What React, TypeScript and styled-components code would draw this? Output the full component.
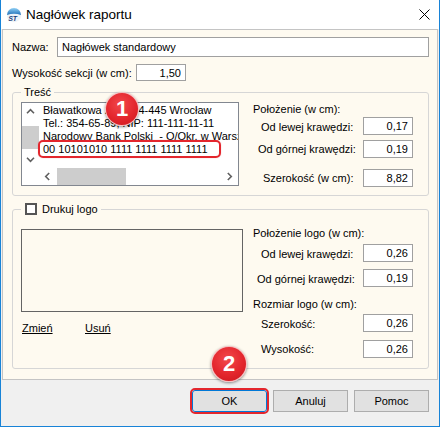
import React from 'react';
import styled, { createGlobalStyle } from 'styled-components';

const GlobalStyle = createGlobalStyle`
  html, body {
    margin: 0;
    padding: 0;
    background: #ffffff;
  }
  body {
    font-family: "Liberation Sans", Arial, sans-serif;
    font-size: 11px;
    color: #000;
  }
  * {
    box-sizing: border-box;
  }
`;

const Window = styled.div`
  width: 440px;
  height: 427px;
  display: flex;
  flex-direction: column;
  border: 1px solid #1883d7;
  border-top: none;
  background: #f0f0f0;
`;

const TitleBar = styled.div`
  height: 29px;
  flex: none;
  display: flex;
  align-items: center;
  padding: 0 9px 0 5px;
  background: #ffffff;
`;

const TitleText = styled.span`
  flex: 1;
  margin-left: 4px;
  font-size: 13.5px;
`;

const Body = styled.div`
  height: 351px;
  flex: none;
  margin: 0 1px;
  border: 1px solid #c4c4c4;
  background: #fefaf0;
  padding: 7px 8px 0 9px;
`;

const Row = styled.div<{ $cols: string; $h: number; $mt?: number }>`
  display: grid;
  grid-template-columns: ${(p) => p.$cols};
  align-items: center;
  height: ${(p) => p.$h}px;
  margin-top: ${(p) => p.$mt ?? 0}px;
`;

const Field = styled.input<{ $right?: boolean }>`
  height: 100%;
  width: 100%;
  margin: 0;
  border: 1px solid #a0a0a0;
  background: #ffffff;
  font: inherit;
  color: #000;
  padding: 0 ${(p) => (p.$right ? 4 : 0)}px 0 ${(p) => (p.$right ? 0 : 4)}px;
  text-align: ${(p) => (p.$right ? 'right' : 'left')};
  outline: none;
`;

const Group = styled.fieldset<{ $mt: number; $pt: number; $pb: number }>`
  margin: ${(p) => p.$mt}px 0 0 0;
  padding: ${(p) => p.$pt}px 8px ${(p) => p.$pb}px 8px;
  border: 1px solid #d6d6d6;
  border-radius: 3px;
  min-width: 0;
  display: grid;
  grid-template-columns: 232px 1fr;
`;

const Legend = styled.legend`
  display: flex;
  align-items: center;
  gap: 5px;
  padding: 0 3px 0 3px;
  line-height: 14px;
  height: 14px;
`;

const CheckBox = styled.span`
  display: inline-block;
  width: 12px;
  height: 12px;
  margin-left: 1px;
  border: 2px solid #555555;
  background: #ffffff;
`;

const TextBox = styled.div`
  position: relative;
  width: 218px;
  height: 84px;
  border: 1px solid #828790;
  background: #ffffff;
  display: grid;
  grid-template-columns: 17px 1fr;
  grid-template-rows: 1fr 17px;
`;

const VScroll = styled.div`
  grid-column: 1;
  grid-row: 1;
  display: flex;
  flex-direction: column;
`;

const HScroll = styled.div`
  grid-column: 2;
  grid-row: 2;
  display: flex;
`;

const ArrowBtn = styled.div`
  width: 17px;
  height: 17px;
  flex: none;
  display: flex;
  align-items: center;
  justify-content: center;
`;

const Track = styled.div<{ $vertical?: boolean }>`
  flex: 1;
  display: flex;
  flex-direction: ${(p) => (p.$vertical ? 'column' : 'row')};
  padding: ${(p) => (p.$vertical ? '6px 0 0 0' : '0 0 0 1px')};
`;

const Thumb = styled.div<{ $vertical?: boolean }>`
  background: #cdcdcd;
  width: ${(p) => (p.$vertical ? '17px' : '69px')};
  height: ${(p) => (p.$vertical ? '23px' : '17px')};
`;

const TextLines = styled.div`
  grid-column: 2;
  grid-row: 1;
  overflow: hidden;
  padding: 1px 0 0 4px;
`;

const Line = styled.div<{ $cover?: boolean }>`
  white-space: nowrap;
  line-height: 13px;
  height: 13px;
  background: ${(p) => (p.$cover ? '#ffffff' : 'transparent')};
  position: relative;
  margin-top: ${(p) => (p.$cover ? -1 : 0)}px;
  padding-top: ${(p) => (p.$cover ? 1 : 0)}px;
`;

const Highlight = styled.div`
  position: absolute;
  left: 16px;
  top: 37px;
  width: 183px;
  height: 18px;
  border: 2px solid #e3262d;
  border-radius: 5px;
  box-shadow: 0 0 1px rgba(227, 38, 45, 0.5);
`;

const Badge = styled.div<{ $size: number; $left: number; $top: number }>`
  position: absolute;
  left: ${(p) => p.$left}px;
  top: ${(p) => p.$top}px;
  width: ${(p) => p.$size}px;
  height: ${(p) => p.$size}px;
  border-radius: 50%;
  background: radial-gradient(circle at 45% 35%, #f2484c 0%, #e3262d 55%, #c9161d 100%);
  border: 1px solid rgba(255, 255, 255, 0.7);
  box-shadow: 0 1px 3px rgba(0, 0, 0, 0.45);
  color: #ffffff;
  font-family: "Liberation Sans", Arial, sans-serif;
  font-weight: 700;
  font-size: 22px;
  display: flex;
  align-items: center;
  justify-content: center;
  z-index: 2;
`;

const SideColumn = styled.div`
  display: flex;
  flex-direction: column;
`;

const Heading = styled.div<{ $mt?: number }>`
  line-height: 14px;
  height: 14px;
  margin-top: ${(p) => p.$mt ?? 0}px;
  white-space: nowrap;
`;

const NumRowWrap = styled.div<{ $mt: number }>`
  display: grid;
  grid-template-columns: 110px 50px;
  height: 18px;
  margin-top: ${(p) => p.$mt}px;
  align-items: center;
`;

const NumLabel = styled.span<{ $indent: number; $drop: number }>`
  padding-left: ${(p) => p.$indent}px;
  padding-top: ${(p) => p.$drop * 2}px;
  white-space: nowrap;
  line-height: 14px;
`;

const LogoBox = styled.div`
  margin-top: 3px;
  width: 222px;
  height: 83px;
  border: 1px solid #646464;
`;

const Links = styled.div`
  display: grid;
  grid-template-columns: 63px auto;
  margin-top: 9px;
  padding-left: 1px;
  line-height: 14px;
`;

const LinkText = styled.span`
  text-decoration: underline;
`;

const LeftColumn = styled.div`
  display: flex;
  flex-direction: column;
`;

const Footer = styled.div`
  height: 46px;
  flex: none;
  display: flex;
  justify-content: flex-end;
  gap: 6px;
  padding: 10px 10px 0 0;
  background: #f0f0f0;
`;

const ButtonSlot = styled.div`
  position: relative;
`;

const Button = styled.button<{ $marked?: boolean }>`
  width: 75px;
  height: 22px;
  margin: 0;
  padding: 0;
  font: inherit;
  color: #000;
  background: #e1e1e1;
  border: 1px solid ${(p) => (p.$marked ? '#0078d7' : '#adadad')};
  border-radius: ${(p) => (p.$marked ? '3px' : '0')};
  outline: ${(p) => (p.$marked ? '2px solid #e3262d' : 'none')};
  outline-offset: 0;
`;

const ChevronSvg = styled.svg<{ $rot: number }>`
  transform: rotate(${(p) => p.$rot}deg);
`;

const Chevron: React.FC<{ dir: 'up' | 'down' | 'left' | 'right' }> = ({ dir }) => {
  const rot = { up: 0, right: 90, down: 180, left: 270 }[dir];
  return (
    <ChevronSvg $rot={rot} width="9" height="9" viewBox="0 0 9 9">
      <path d="M1 6.2 L4.5 2.7 L8 6.2" fill="none" stroke="#606060" strokeWidth="1.6" />
    </ChevronSvg>
  );
};

const AppIcon = () => (
  <svg width="16" height="16" viewBox="0 0 16 16">
    <defs>
      <linearGradient id="sky" x1="0" y1="0" x2="0" y2="1">
        <stop offset="0" stopColor="#8fd0f5" />
        <stop offset="1" stopColor="#1f6fb8" />
      </linearGradient>
    </defs>
    <circle cx="8" cy="8" r="7.2" fill="#eef3f8" />
    <path d="M1 8 A7 7 0 0 1 15 8 Q8 5.5 1 8 Z" fill="url(#sky)" />
    <text x="2.2" y="13.5" fontSize="7" fontWeight="700" fontStyle="italic" fill="#1b3e78" fontFamily="Liberation Sans, Arial, sans-serif">
      ST
    </text>
  </svg>
);

const CloseIcon = () => (
  <svg width="11" height="11" viewBox="0 0 11 11">
    <path d="M0.5 0.5 L10.5 10.5 M10.5 0.5 L0.5 10.5" stroke="#000" strokeWidth="1" />
  </svg>
);

const NumRow: React.FC<{ label: string; value: string; mt: number; indent: number; drop?: number }> = ({
  label,
  value,
  mt,
  indent,
  drop = 0,
}) => (
  <NumRowWrap $mt={mt}>
    <NumLabel $indent={indent} $drop={drop}>
      {label}
    </NumLabel>
    <Field $right readOnly value={value} />
  </NumRowWrap>
);

const App: React.FC = () => {
  return (
    <>
      <GlobalStyle />
      <Window>
        <TitleBar>
          <AppIcon />
          <TitleText>Nagłówek raportu</TitleText>
          <CloseIcon />
        </TitleBar>

        <Body>
          <Row $cols="45px 1fr" $h={20}>
            <span>Nazwa:</span>
            <Field readOnly value="Nagłówek standardowy" />
          </Row>
          <Row $cols="124px 50px" $h={17} $mt={7}>
            <span>Wysokość sekcji (w cm):</span>
            <Field $right readOnly value="1,50" />
          </Row>

          <Group $mt={4} $pt={3} $pb={8}>
            <Legend>Treść</Legend>
            <TextBox>
              <VScroll>
                <ArrowBtn>
                  <Chevron dir="up" />
                </ArrowBtn>
                <Track $vertical>
                  <Thumb $vertical />
                </Track>
                <ArrowBtn>
                  <Chevron dir="down" />
                </ArrowBtn>
              </VScroll>
              <TextLines>
                <Line>Bławatkowa 25/1, 54-445 Wrocław</Line>
                <Line>Tel.: 354-65-89, NIP: 111-111-11-11</Line>
                <Line>Narodowy Bank Polski&nbsp; - O/Okr. w Warszawie</Line>
                <Line $cover>00 10101010 1111 1111 1111 1111</Line>
              </TextLines>
              <HScroll>
                <ArrowBtn>
                  <Chevron dir="left" />
                </ArrowBtn>
                <Track>
                  <Thumb />
                </Track>
                <ArrowBtn>
                  <Chevron dir="right" />
                </ArrowBtn>
              </HScroll>
              <Highlight />
              <Badge $size={34} $left={83} $top={-11}>
                1
              </Badge>
            </TextBox>
            <SideColumn>
              <Heading>Położenie (w cm):</Heading>
              <NumRow label="Od lewej krawędzi:" value="0,17" mt={1} indent={8} drop={1} />
              <NumRow label="Od górnej krawędzi:" value="0,19" mt={5} indent={5} />
              <NumRow label="Szerokość (w cm):" value="8,82" mt={11} indent={10} />
            </SideColumn>
          </Group>

          <Group $mt={6} $pt={10} $pb={10}>
            <Legend>
              <CheckBox />
              Drukuj logo
            </Legend>
            <LeftColumn>
              <LogoBox />
              <Links>
                <LinkText>Zmień</LinkText>
                <LinkText>Usuń</LinkText>
              </Links>
            </LeftColumn>
            <SideColumn>
              <Heading>Położenie logo (w cm):</Heading>
              <NumRow label="Od lewej krawędzi:" value="0,26" mt={4} indent={8} drop={1} />
              <NumRow label="Od górnej krawędzi:" value="0,19" mt={7} indent={4} drop={1} />
              <Heading $mt={10}>Rozmiar logo (w cm):</Heading>
              <NumRow label="Szerokość:" value="0,26" mt={3} indent={8} drop={1} />
              <NumRow label="Wysokość:" value="0,26" mt={8} indent={8} />
            </SideColumn>
          </Group>
        </Body>

        <Footer>
          <ButtonSlot>
            <Button $marked>OK</Button>
            <Badge $size={36} $left={19} $top={-44}>
              2
            </Badge>
          </ButtonSlot>
          <Button>Anuluj</Button>
          <Button>Pomoc</Button>
        </Footer>
      </Window>
    </>
  );
};

export default App;
